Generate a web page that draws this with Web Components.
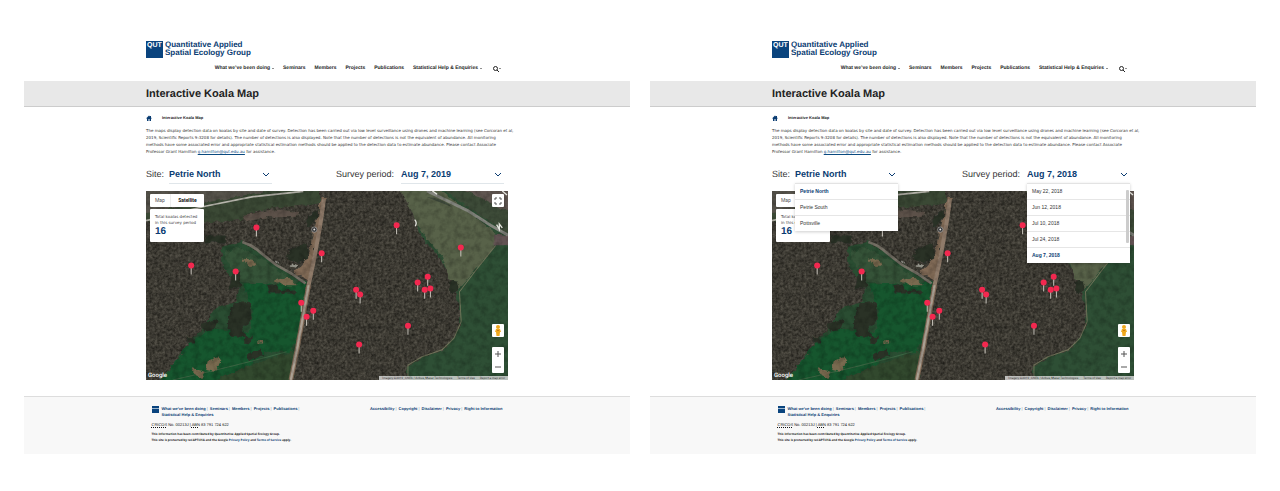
<!DOCTYPE html>
<html lang="en">
<head>
<meta charset="utf-8">
<title>Interactive Koala Map</title>
<style>
body{margin:0;background:#fff;font-family:"Liberation Sans",Arial,sans-serif;color:#333;text-rendering:geometricPrecision}
main{display:grid;grid-template-columns:1fr 1fr;gap:20px;padding:41px 24px 37px}
</style>
</head>
<body>
<main>
  <survey-page period="Aug 7, 2019"></survey-page>
  <survey-page period="Aug 7, 2018" open></survey-page>
</main>

<script>
const define = (name, html, setup) => {
  const t = document.createElement('template');
  t.innerHTML = html;
  customElements.define(name, class extends HTMLElement {
    constructor() {
      super();
      this.attachShadow({mode: 'open'}).append(t.content.cloneNode(true));
    }
    connectedCallback() { if (setup) setup(this, this.shadowRoot); }
  });
};

define('site-header', `
<style>
:host{display:block}
.brand{display:flex;gap:2px;color:#0a3c72;text-decoration:none;font-weight:700;font-size:8px;line-height:8px}
.mark{width:17px;height:17px;background:#0a447e;color:#fff;flex:none;font-size:7px;line-height:10px;text-align:center;overflow:hidden}
nav{display:flex;justify-content:flex-end;gap:9px;margin-top:7px;padding-right:7px;font-size:5px;line-height:7px;font-weight:700}
nav a{color:#222;text-decoration:none;white-space:nowrap;display:flex;align-items:center}
i{border:1px solid transparent;border-top-color:#222;border-bottom:0;margin-left:2px}
button{all:unset;display:flex;align-items:center;margin-left:2px}
i.s{margin-left:0}
svg{width:6px;height:6px;fill:none;stroke:#222;stroke-width:2}
</style>
<a class="brand" href="#"><span class="mark">QUT</span><span>Quantitative Applied<br>Spatial Ecology Group</span></a>
<nav>
<a href="#">What we’ve been doing <i></i></a><a href="#">Seminars</a><a href="#">Members</a><a href="#">Projects</a><a href="#">Publications</a><a href="#">Statistical Help &amp; Enquiries <i></i></a>
<button aria-label="Search"><svg viewBox="0 0 12 12"><circle cx="5" cy="5" r="4"/><path d="M8 8l4 4"/></svg><i class="s"></i></button>
</nav>`);

define('drop-field', `
<style>
:host{display:flex;align-items:flex-start;position:relative;font-size:9px;line-height:18px}
label{margin-right:var(--gap,5px);white-space:nowrap}
.box{position:relative;width:103px;border-bottom:1px solid #e0e6ea;display:flex;align-items:center}
select{appearance:none;border:0;background:none;margin:0;padding:0;width:100%;height:18px;font:700 9px/18px "Liberation Sans",Arial,sans-serif;color:#0a3c72;outline:0}
svg{position:absolute;right:3px;top:7px;width:6px;height:6px;fill:none;stroke:#0a3c72;stroke-width:1;pointer-events:none}
ul{display:none;position:absolute;z-index:3;top:18px;left:0;right:0;margin:0;padding:0;list-style:none;background:#fff;box-shadow:0 1px 3px #0003;border-top:1px solid #e3e3e3}
:host([open]) ul{display:block}
li button{display:block;width:100%;border:0;background:none;text-align:left;padding:0 0 0 5px;font:5px/15px "Liberation Sans",Arial,sans-serif;color:#333}
li+li{border-top:1px solid #e6e6e6}
li[aria-selected=true] button{font-weight:700;color:#0a3c72}
.bar{display:none;position:absolute;right:1px;top:6px;width:3px;height:53px;background:#ccc;border-radius:1px}
:host([scroll]) .bar{display:block}
</style>
<label for="s"><slot></slot></label>
<div class="box"><select id="s"></select><svg viewBox="0 0 6 6"><path d="M0 1l3 3 3-3"/></svg>
<ul role="listbox"></ul></div>`, (el, root) => {
  const val = el.getAttribute('value');
  const sel = root.querySelector('select'), ul = root.querySelector('ul');
  el.getAttribute('options').split('|').forEach(o => {
    sel.add(new Option(o, o, o === val, o === val));
    if (!el.hasAttribute('open')) return;
    const li = document.createElement('li'), b = document.createElement('button');
    li.setAttribute('role', 'option');
    li.setAttribute('aria-selected', o === val);
    b.textContent = o;
    b.onclick = () => { sel.value = o; el.removeAttribute('open'); };
    li.append(b); ul.append(li);
  });
  if (el.hasAttribute('scroll')) {
    const bar = document.createElement('div');
    bar.className = 'bar';
    ul.append(bar);
  }
});

define('koala-map', `
<style>
:host{display:block;position:relative;aspect-ratio:362/189;font-family:Roboto,sans-serif;overflow:hidden;background:#3c3a34}
.land{display:block;width:100%;height:100%}
.types{position:absolute;left:4px;top:3px;width:54px;display:flex;background:#fff;border-radius:1px}
.types button{border:0;background:none;margin:0;padding:0 5px;font:5px/13px Roboto,sans-serif;color:#555}
.types button+button{flex:1;font-weight:700;color:#111;border-left:1px solid #eee}
.count{position:absolute;left:4px;top:18px;width:44px;padding:5px;background:#fff;border-radius:1px;font:4px/6px "DejaVu Sans",sans-serif;color:#444;white-space:nowrap}
.count b{display:block;font:700 10px/11px "Liberation Sans",Arial,sans-serif;color:#0a3c72}
.ctl{position:absolute;right:4px;width:12px;display:grid;background:#fff;border-radius:1px}
.ctl button{border:0;background:none;padding:0;height:13px;display:grid;place-items:center}
.ctl svg{width:8px;height:8px;fill:none;stroke:#555;stroke-width:1}
.full{top:3px}.peg{bottom:43px}.zoom{bottom:7px}
.ctl.peg svg{width:10px;height:11px;stroke:none;fill:#f0a91e}
.g{position:absolute;left:2px;bottom:1px;font:500 6px/7px Roboto,sans-serif;color:#fff}
.attr{position:absolute;right:0;bottom:0;background:#dededecc;font-size:3px;line-height:4px;display:flex;gap:5px;padding:0 3px;white-space:nowrap;color:#333}
.attr a{color:#333;text-decoration:none}
</style>
<svg class="land" viewBox="20 17 1082 568" preserveAspectRatio="none" role="img" aria-label="Satellite view with koala detections">
<defs>
<filter id="trees" x="0" y="0" width="100%" height="100%" color-interpolation-filters="sRGB"><feTurbulence type="fractalNoise" baseFrequency=".13" numOctaves="2" seed="4"/><feColorMatrix values=".28 0 0 0 .11  .27 0 0 0 .105  .25 0 0 0 .085  0 0 0 0 1"/><feComposite in2="SourceGraphic" operator="in"/></filter>
<filter id="grain" x="0" y="0" width="100%" height="100%" color-interpolation-filters="sRGB"><feTurbulence type="fractalNoise" baseFrequency=".05" numOctaves="3" seed="9"/><feColorMatrix values="0 0 0 0 0  0 0 0 0 0  0 0 0 0 0  1.6 0 0 0 -.62"/><feComposite in2="SourceGraphic" operator="in"/></filter>
<filter id="rough" x="-5%" y="-5%" width="110%" height="110%"><feTurbulence type="fractalNoise" baseFrequency=".06" numOctaves="2" seed="2"/><feDisplacementMap in="SourceGraphic" scale="16" xChannelSelector="R" yChannelSelector="G"/></filter>
<g id="pin"><path d="M0 5v22" stroke="#c9c5bd" stroke-width="3"/><circle r="9" fill="#f3284f"/></g>
</defs>
<rect x="20" y="17" width="1082" height="568" filter="url(#trees)"/>
<g filter="url(#rough)">
<path d="M10 7H540V50L480 62L400 66L330 82L300 104L190 112L10 108Z" fill="#3a4a34"/>
<path d="M10 7H430L190 54L10 82Z" fill="#57524c"/>
<path d="M305 92L400 72L480 80L470 95L380 96L320 108Z" fill="#5c5148"/>
<path d="M245 185L310 168L400 232L500 300L484 400L455 585H60L100 540L150 475L190 430L225 370L290 350L300 300L250 250Z" fill="#2a4e31"/>
<path d="M310 295L500 290L480 430L455 500L380 500L330 540L210 595H60L100 540L150 475L215 430L330 440L340 380Z" fill="#16562f"/>
<path d="M330 540L455 500V595H210Z" fill="#30492f"/>
<path d="M250 205L300 185L395 240L480 300L300 290Z" fill="#365339"/>
<path d="M780 7H1112V595H800V545L850 515L910 495L958 430L960 385L945 325L955 300L930 280L905 225L868 185L835 140L820 85Z" fill="#2f5036"/>
<path d="M775 7H890L1062 140L1064 182L1010 250L950 318L925 270L905 215L868 170L830 120L812 70Z" fill="#59624a"/>
<path d="M900 7H1112V155Z" fill="#3d4b38"/>
<path d="M960 7H1112V85Z" fill="#605751"/>
<path d="M1060 145L1112 150V180L1062 180Z" fill="#625253"/>
<path d="M542 38H562L553 60L545 105L525 190L510 300L484 390L505 285L460 262L490 235L508 195L520 140L535 90Z" fill="#806a56"/>
</g>
<g fill="none">
<path d="M552 42L540 125L522 225L506 300" stroke="#8f7b6a" stroke-width="12"/>
<path d="M506 300L490 390L474 480L453 585" stroke="#806a56" stroke-width="14"/>
<path d="M506 300L490 390L474 480L453 585" stroke="#aca194" stroke-width="7"/>
<path d="M308 170Q340 180 362 202L410 240L455 265L497 295" stroke="#777267" stroke-width="8"/>
<path d="M20 106L200 62L340 34L490 18" stroke="#b8b6ad" stroke-width="5"/>
<path d="M860 17L980 75L1050 120L1102 150" stroke="#85877f" stroke-width="9"/>
<path d="M1064 182L1010 250L957 320L962 410L940 460L905 494L845 515L803 540V585" stroke="#72765b" stroke-width="3"/>
<path d="M100 585Q300 540 440 500" stroke="#3c6543" stroke-width="3"/>
</g>
<g filter="url(#rough)">
<path d="M205 525L232 515L245 535L225 560L200 555ZM160 550L195 560L185 580L165 570ZM310 220L345 225L350 245L325 245ZM405 285L445 275L470 300L425 300ZM356 465h14v10h-14Z" fill="#796a4f"/>
<path d="M382 300L410 295L420 318L460 312L475 325H390ZM280 355L330 350L335 400L310 430L325 460L275 455L262 415ZM315 510L360 490L370 510L330 530ZM185 415L235 405L225 435L190 440ZM310 455L340 455L335 475L315 472ZM140 455h25v20h-25ZM275 265L300 260L305 310L270 310ZM195 150H255L260 172H195ZM505 90L535 75L530 105L500 130ZM455 190L500 170L505 220L475 235L440 215ZM925 285L950 290L955 315L930 325Z" fill="#2c3128"/>
<path d="M455 235l20 5-8 8-18-4ZM405 225l14 5-5 5-12-5Z" fill="#9c9c92"/>
</g>
<path d="M860 36Q900 35 935 65Q895 50 860 36Z" fill="#3e493b"/>
<rect x="20" y="17" width="1082" height="568" filter="url(#grain)" opacity=".3"/>
<circle cx="523" cy="133" r="8" fill="#333" stroke="#aaa" stroke-width="2"/><circle cx="523" cy="133" r="3" fill="#ddd"/>
<path d="M876 17l14 10M823 103q8 8 2 20M1068 118l8 14 0-16 9 12M1085 17l14 12" fill="none" stroke="#e5e5df" stroke-width="4"/>
<g class="pins"></g>
</svg>
<div class="types"><button>Map</button><button>Satellite</button></div>
<div class="count">Total koalas detected<br>in this survey period<b>16</b></div>
<div class="ctl full"><button aria-label="Full screen"><svg viewBox="0 0 8 8"><path d="M1 3V1H3M5 1H7V3M7 5V7H5M3 7H1V5"/></svg></button></div>
<div class="ctl peg"><button aria-label="Street view"><svg viewBox="0 0 10 11"><circle cx="5" cy="2" r="2"/><path d="M3 4h4l1 3H7L6.500 11h-3L3 7H2Z"/><path d="M4 5h2v1H4Z" fill="#c97d10"/></svg></button></div>
<div class="ctl zoom"><button aria-label="Zoom in"><svg viewBox="0 0 8 8"><path d="M1 4h6M4 1v6"/></svg></button><button aria-label="Zoom out"><svg viewBox="0 0 8 8"><path d="M1 4h6"/></svg></button></div>
<div class="g">Google</div>
<div class="attr"><span>Imagery ©2019 , CNES / Airbus, Maxar Technologies</span><a href="#">Terms of Use</a><a href="#">Report a map error</a></div>
`, (el, root) => {
  const spots = [[350,127],[155,241],[288,259],[545,204],[769,120],[961,187],[862,275],[832,292],[870,310],[853,314],[648,314],[660,328],[484,353],[520,377],[500,395],[803,422],[657,478]];
  const layer = root.querySelector('.pins');
  for (const [x, y] of spots) {
    const u = document.createElementNS('http://www.w3.org/2000/svg', 'use');
    u.setAttribute('href', '#pin');
    u.setAttribute('x', x); u.setAttribute('y', y);
    layer.append(u);
  }
});

define('site-footer', `
<style>
:host{display:block;background:#f8f8f8;border-top:1px solid #ddd;font-size:4px;color:#222;font-weight:700}
.in{max-width:351px;margin:0 auto;padding:9px 0 11px}
a{color:#0a3c72;text-decoration:none}
.top{display:flex;line-height:6px;align-items:flex-start}
.mark{width:7px;height:7px;background:linear-gradient(#0a447e 2px,#9db6cd 2px,#9db6cd 3px,#0a447e 3px);margin-right:3px}
.l{flex:1}.r{white-space:nowrap}
.l span,.r span{display:inline-block;width:3px;text-align:center;color:#8799aa;font-weight:400}
p{margin:0;line-height:6px}
.id{margin-top:3px;font-weight:400;line-height:7px;color:#111}
abbr{text-decoration:underline dotted}
.n{font-size:3px;font-family:"Open Sans",sans-serif}.id+.n{margin-top:3px}
</style>
<div class="in"><div class="top"><div class="mark"></div>
<div class="l"><a href="#">What we’ve been doing</a><span>|</span> <a href="#">Seminars</a><span>|</span> <a href="#">Members</a><span>|</span> <a href="#">Projects</a><span>|</span> <a href="#">Publications</a><span>|</span><br><a href="#">Statistical Help &amp; Enquiries</a></div>
<div class="r"><a href="#">Accessibility</a><span>|</span> <a href="#">Copyright</a><span>|</span> <a href="#">Disclaimer</a><span>|</span> <a href="#">Privacy</a><span>|</span> <a href="#">Right to Information</a></div></div>
<p class="id"><abbr>CRICOS</abbr> No. 00213J | <abbr>ABN</abbr> 83 791 724 622</p>
<p class="n">This information has been contributed by Quantitative Applied Spatial Ecology Group.</p>
<p class="n">This site is protected by reCAPTCHA and the Google <a href="#">Privacy Policy</a> and <a href="#">Terms of Service</a> apply.</p></div>`);

define('survey-page', `
<style>
:host{display:block;min-width:0}
.wrap{display:block;max-width:362px;margin:0 auto}
.band{margin-top:9px;padding-top:2px;background:#e8e8e8;border-bottom:1px solid #ccc}
h1{font-size:11px;line-height:23px;color:#222}
.crumb{display:flex;align-items:center;gap:10px;height:8px;margin-top:7px;font-size:4px;line-height:8px;font-weight:700;color:#222}
.crumb a{display:flex}
.crumb svg{width:6px;height:6px;fill:#0a3c72}
p{margin:5px 0 10px;font:4px/7px "DejaVu Sans",sans-serif;white-space:nowrap;color:#333}
p a{color:#0a4a80}
.fields{display:flex;justify-content:space-between;margin-bottom:7px;padding-right:4px;color:#333}
.period{--gap:7px}
site-footer{margin-top:16px}
</style>
<site-header class="wrap"></site-header>
<div class="band"><h1 class="wrap">Interactive Koala Map</h1></div>
<div class="wrap">
<div class="crumb"><a href="#" aria-label="Home"><svg viewBox="0 0 12 12"><path d="M6 1L0 7h2v5h3V8h2v4h3V7h2L10 5V2H8v1Z"/></svg></a><span>Interactive Koala Map</span></div>
<p>The maps display detection data on koalas by site and date of survey. Detection has been carried out via low level surveillance using drones and machine learning (see Corcoran et al,<br>2019, Scientific Reports 9:3208 for details). The number of detections is also displayed. Note that the number of detections is not the equivalent of abundance. All monitoring<br>methods have some associated error and appropriate statistical estimation methods should be applied to the detection data to estimate abundance. Please contact Associate<br>Professor Grant Hamilton <a href="#">g.hamilton@qut.edu.au</a> for assistance.</p>
<div class="fields"><drop-field class="site" value="Petrie North" options="Petrie North|Petrie South|Pottsville">Site:</drop-field><drop-field class="period" options="May 22, 2018|Jun 12, 2018|Jul 10, 2018|Jul 24, 2018|Aug 7, 2018">Survey period:</drop-field></div>
<koala-map></koala-map>
</div>
<site-footer></site-footer>`, (el, root) => {
  const p = root.querySelector('.period'), s = root.querySelector('.site');
  const period = el.getAttribute('period');
  const fresh = (old, attrs) => {
    const n = document.createElement('drop-field');
    n.className = old.className;
    n.textContent = old.textContent;
    for (const k in attrs) n.setAttribute(k, attrs[k]);
    old.replaceWith(n);
  };
  const open = el.hasAttribute('open');
  fresh(s, {value: 'Petrie North', options: s.getAttribute('options'), ...(open && {open: ''})});
  fresh(p, {value: period, options: p.getAttribute('options') + (open ? '' : '|' + period), ...(open && {open: '', scroll: ''})});
});
</script>
</body>
</html>
